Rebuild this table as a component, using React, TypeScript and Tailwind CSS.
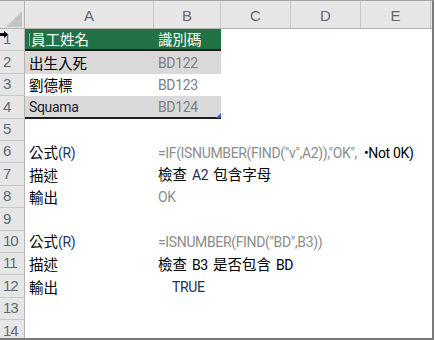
import React from 'react';

const cols = [
  { label: 'A', w: 'w-[129px]' },
  { label: 'B', w: 'w-[67px]' },
  { label: 'C', w: 'w-[70px]' },
  { label: 'D', w: 'w-[70px]' },
  { label: 'E', w: 'w-[70px]' },
];

const cjk = "font-['Noto_Sans_CJK_TC','Liberation_Sans',sans-serif]";

// latin text is narrower than the CJK text around it
const L = ({ children, className = '' }: { children: React.ReactNode; className?: string }) => (
  <span className={`font-['Roboto','Liberation_Sans',sans-serif] text-[14px] tracking-[-0.35px] ${className}`}>{children}</span>
);

type Row = {
  a?: React.ReactNode;
  b?: React.ReactNode;
  shade?: boolean;
  green?: boolean;
  line?: boolean;
};

const rows: Row[] = [
  { a: '員工姓名', b: '識別碼', green: true, line: true },
  { a: '出生入死', b: <L>BD122</L>, shade: true },
  { a: '劉德標', b: <L>BD123</L> },
  { a: <L className="text-[#1a1a2e]">Squama</L>, b: <L>BD124</L>, shade: true, line: true },
  {},
  {
    a: (
      <>
        公式<L className="text-[#1f3864]">(R)</L>
      </>
    ),
    b: (
      <>
        <L className="text-[#8c8c8c]">=IF(ISNUMBER(FIND("v",A2)),"OK",</L>
        <L className="ml-[7px] text-[12.5px] text-black">•Not 0K)</L>
      </>
    ),
  },
  {
    a: '描述',
    b: (
      <>
        檢查<L className="ml-[5px] mr-[5px] text-[#1f2d5a]">A2</L>包含字母
      </>
    ),
  },
  { a: '輸出', b: <L className="text-[#8c8c8c]">OK</L> },
  {},
  {
    a: (
      <>
        公式<L className="text-[#1f3864]">(R)</L>
      </>
    ),
    b: <L className="text-[#8c8c8c]">=ISNUMBER(FIND("BD",B3))</L>,
  },
  {
    a: '描述',
    b: (
      <>
        檢查<L className="ml-[5px] mr-[5px]">B3</L>是否包含<L className="ml-[5px]">BD</L>
      </>
    ),
  },
  { a: '輸出', b: <L className="ml-[14px] text-[#1f3050]">TRUE</L> },
  {},
  {},
];

export default function App() {
  return (
    <div className="w-[435px] h-[340px] bg-white overflow-hidden font-['Liberation_Sans',sans-serif]">
      <div className="w-[434px] h-[340px] border-t border-t-[#a6a6a6] border-r-2 border-r-[#7a7a7a] border-b-2 border-b-[#7a7a7a] overflow-hidden relative">
        {/* column headers */}
        <div className="flex h-[28px] bg-[#e6e6e6] border-b border-b-[#b4b4b4]">
          <div className="w-[25px] shrink-0 border-r border-r-[#b4b4b4] flex items-end justify-end pr-[2px] pb-[1px]">
            <svg width="16" height="16" viewBox="0 0 16 16">
              <polygon points="16,0 16,16 0,16" fill="#c4c4c4" />
            </svg>
          </div>
          {cols.map((c) => (
            <div
              key={c.label}
              className={`${c.w} shrink-0 border-r border-r-[#c8c8c8] flex items-center justify-center text-[15px] text-[#6a6a6a] pt-[3px]`}
            >
              {c.label}
            </div>
          ))}
        </div>

        {/* body rows */}
        {rows.map((r, i) => (
          <div key={i} className="flex h-[22.4px] relative">
            <div className="w-[25px] shrink-0 bg-[#e6e6e6] border-r border-r-[#b4b4b4] border-b border-b-[#c8c8c8] flex items-center pl-[3px] text-[15px] text-[#5e6a78] tracking-[-1px]">
              {i + 1}
            </div>
            <div
              className={`w-[129px] shrink-0 flex items-center pl-[4px] text-[14.5px] whitespace-nowrap ${cjk} ${
                r.green ? 'bg-[#217346] text-white' : r.shade ? 'bg-[#d9d9d9] text-black' : 'text-black'
              } ${r.line ? 'border-b-2 border-b-[#1c1c1c]' : ''}`}
            >
              {i === 0 && <span className="w-[1px] h-[13px] bg-[#6fb6d8] mr-[1px]" />}
              <span>{r.a}</span>
            </div>
            <div
              className={`w-[67px] shrink-0 flex items-center pl-[4px] text-[14.5px] whitespace-nowrap relative ${cjk} ${
                r.green ? 'bg-[#217346] text-white' : r.shade ? 'bg-[#d9d9d9] text-[#7f7f7f]' : i < 4 ? 'text-[#7f7f7f]' : 'text-black'
              } ${r.line ? 'border-b-2 border-b-[#1c1c1c]' : ''}`}
            >
              <span>{r.b}</span>
              {i === 3 && (
                <span className="absolute right-0 bottom-[-1px] w-0 h-0 border-l-[5px] border-l-transparent border-b-[5px] border-b-[#3c5fc4]" />
              )}
            </div>
            <div className="flex-1" />
            {i === 0 && (
              <svg className="absolute left-0 top-[2px]" width="8" height="7" viewBox="0 0 8 7">
                <polygon points="0,2 4,2 4,0 8,3.5 4,7 4,5 0,5" fill="#000" />
              </svg>
            )}
          </div>
        ))}
      </div>
    </div>
  );
}
